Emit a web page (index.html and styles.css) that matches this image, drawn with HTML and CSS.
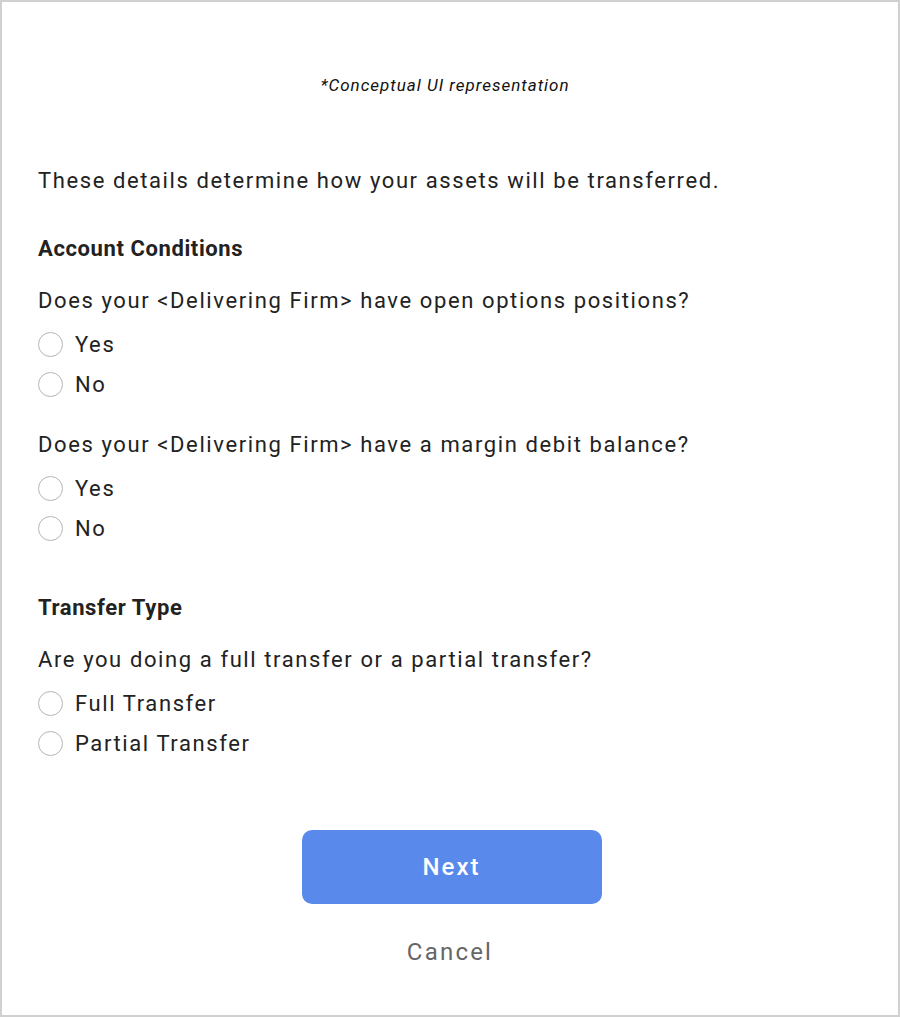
FILE: index.html
```html
<!DOCTYPE html>
<html lang="en">
<head>
<meta charset="utf-8">
<title>Transfer details</title>
<link rel="stylesheet" href="styles.css">
</head>
<body>
<div class="frame">
  <p class="caption">*Conceptual UI representation</p>
  <p class="intro">These details determine how your assets will be transferred.</p>

  <section class="group">
    <h2 class="heading">Account Conditions</h2>
    <div class="question">
      <p class="qtext">Does your &lt;Delivering Firm&gt; have open options positions?</p>
      <label class="option"><span class="radio"></span><span class="label">Yes</span></label>
      <label class="option"><span class="radio"></span><span class="label">No</span></label>
    </div>
    <div class="question second">
      <p class="qtext">Does your &lt;Delivering Firm&gt; have a margin debit balance?</p>
      <label class="option"><span class="radio"></span><span class="label">Yes</span></label>
      <label class="option"><span class="radio"></span><span class="label">No</span></label>
    </div>
  </section>

  <section class="group transfer">
    <h2 class="heading">Transfer Type</h2>
    <div class="question">
      <p class="qtext">Are you doing a full transfer or a partial transfer?</p>
      <label class="option"><span class="radio"></span><span class="label">Full Transfer</span></label>
      <label class="option"><span class="radio"></span><span class="label">Partial Transfer</span></label>
    </div>
  </section>

  <div class="actions">
    <button class="next" type="button">Next</button>
    <button class="cancel" type="button">Cancel</button>
  </div>
</div>
</body>
</html>
```

FILE: styles.css
```css
html, body {
  margin: 0;
  padding: 0;
  background: #fff;
}
.frame {
  box-sizing: border-box;
  width: 900px;
  height: 1017px;
  border: 2px solid #d0d0d0;
  padding: 73px 36px 0 36px;
  font-family: Roboto, "Liberation Sans", sans-serif;
  color: #222;
}
p, h2 {
  margin: 0;
}
.caption {
  font-size: 17px;
  line-height: 20px;
  font-style: italic;
  text-align: center;
  letter-spacing: 1px;
  padding-right: 10px;
  color: #111;
}
.intro {
  margin-top: 72px;
  font-size: 22px;
  line-height: 28px;
  letter-spacing: 1.6px;
}
.group {
  margin-top: 40px;
}
.group.transfer {
  margin-top: 46px;
}
.heading {
  font-size: 22px;
  line-height: 28px;
  font-weight: 700;
  letter-spacing: 0.6px;
}
.question {
  margin-top: 24px;
}
.question.second {
  margin-top: 27px;
}
.qtext {
  font-size: 22px;
  line-height: 28px;
  letter-spacing: 1.6px;
  margin-bottom: 9px;
}
.option {
  display: flex;
  align-items: center;
  gap: 12px;
  height: 40px;
}
.radio {
  box-sizing: border-box;
  width: 25px;
  height: 25px;
  border: 1.5px solid #b5b5b5;
  border-radius: 50%;
  flex: none;
}
.label {
  font-size: 22px;
  letter-spacing: 1.6px;
}
.actions {
  margin-top: 67px;
  display: flex;
  flex-direction: column;
  align-items: center;
}
.next {
  width: 300px;
  height: 74px;
  margin-left: 3px;
  border: none;
  border-radius: 10px;
  background: #5a89ec;
  color: #fff;
  font-family: inherit;
  font-size: 24px;
  font-weight: 500;
  letter-spacing: 2px;
}
.cancel {
  margin-top: 34px;
  border: none;
  background: none;
  padding: 0;
  font-family: inherit;
  font-size: 24px;
  line-height: 28px;
  letter-spacing: 2.2px;
  color: #666;
}
```
